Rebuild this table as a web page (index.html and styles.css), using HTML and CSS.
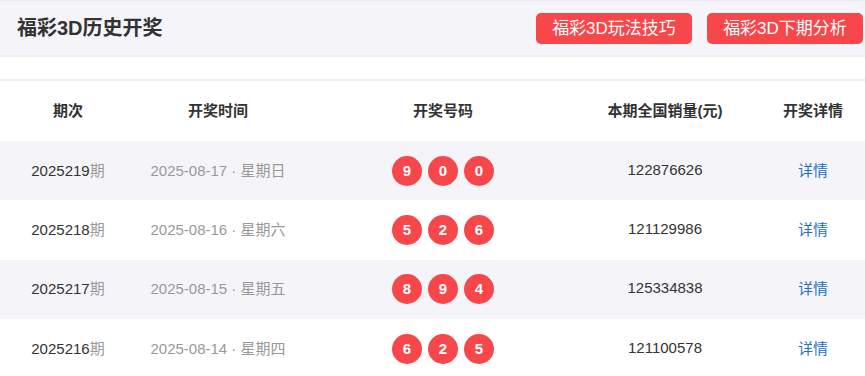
FILE: index.html
```html
<!DOCTYPE html>
<html lang="zh-CN">
<head>
<meta charset="utf-8">
<title>福彩3D历史开奖</title>
<link rel="stylesheet" href="styles.css">
</head>
<body>
<div class="page">
  <header class="top">
    <h1 class="title">福彩3D历史开奖</h1>
    <nav class="actions">
      <a class="btn" href="#">福彩3D玩法技巧</a>
      <a class="btn" href="#">福彩3D下期分析</a>
    </nav>
  </header>
  <div class="spacer"></div>
  <div class="table">
    <div class="row head">
      <div class="cell">期次</div>
      <div class="cell">开奖时间</div>
      <div class="cell">开奖号码</div>
      <div class="cell">本期全国销量(元)</div>
      <div class="cell">开奖详情</div>
    </div>
    <div class="row odd">
      <div class="cell issue">2025219<span class="unit">期</span></div>
      <div class="cell date">2025-08-17 · 星期日</div>
      <div class="cell balls"><span class="ball">9</span><span class="ball">0</span><span class="ball">0</span></div>
      <div class="cell sales">122876626</div>
      <div class="cell"><a class="link" href="#">详情</a></div>
    </div>
    <div class="row">
      <div class="cell issue">2025218<span class="unit">期</span></div>
      <div class="cell date">2025-08-16 · 星期六</div>
      <div class="cell balls"><span class="ball">5</span><span class="ball">2</span><span class="ball">6</span></div>
      <div class="cell sales">121129986</div>
      <div class="cell"><a class="link" href="#">详情</a></div>
    </div>
    <div class="row odd">
      <div class="cell issue">2025217<span class="unit">期</span></div>
      <div class="cell date">2025-08-15 · 星期五</div>
      <div class="cell balls"><span class="ball">8</span><span class="ball">9</span><span class="ball">4</span></div>
      <div class="cell sales">125334838</div>
      <div class="cell"><a class="link" href="#">详情</a></div>
    </div>
    <div class="row">
      <div class="cell issue">2025216<span class="unit">期</span></div>
      <div class="cell date">2025-08-14 · 星期四</div>
      <div class="cell balls"><span class="ball">6</span><span class="ball">2</span><span class="ball">5</span></div>
      <div class="cell sales">121100578</div>
      <div class="cell"><a class="link" href="#">详情</a></div>
    </div>
  </div>
</div>
</body>
</html>
```

FILE: styles.css
```css
html, body {
  margin: 0;
  padding: 0;
  background: #fff;
  overflow: hidden;
}
body {
  font-family: "Liberation Sans", Arial, "Noto Sans CJK SC", sans-serif;
  color: #333;
}
.page {
  width: 865px;
  overflow: hidden;
}
.top {
  display: flex;
  align-items: center;
  justify-content: space-between;
  height: 54px;
  padding: 0 2px 0 17px;
  background: #f5f5f9;
  border-top: 1px solid #ebebef;
  border-bottom: 2px solid #eeeeee;
}
.title {
  margin: 0;
  font-size: 20px;
  font-weight: bold;
  color: #333;
  line-height: 1;
}
.actions {
  display: flex;
  gap: 15px;
  padding-top: 1px;
}
.btn {
  display: block;
  width: 156px;
  height: 31px;
  line-height: 31px;
  text-align: center;
  background: #f7474a;
  color: #fff;
  font-size: 17px;
  border-radius: 5px;
  text-decoration: none;
}
.spacer {
  height: 22px;
}
.table {
  width: 882px;
  border-top: 2px solid #eeeeee;
}
.row {
  display: grid;
  grid-template-columns: 136px 164px 286px 158px 138px;
  height: 59.4px;
  align-items: center;
}
.row.head {
  height: 60px;
  font-weight: bold;
  font-size: 15px;
  color: #333;
}
.row.odd {
  background: #f5f5f9;
}
.cell {
  text-align: center;
  font-size: 15px;
  padding-bottom: 3px;
}
.issue {
  color: #333;
}
.unit {
  color: #999;
}
.date {
  color: #999;
}
.cell.balls {
  display: flex;
  justify-content: center;
  gap: 6px;
  padding-bottom: 0;
}
.ball {
  width: 30px;
  height: 30px;
  border-radius: 50%;
  background: #f7474a;
  color: #fff;
  font-weight: bold;
  font-size: 15px;
  line-height: 30px;
  text-align: center;
}
.sales {
  color: #333;
}
.link {
  color: #2471c6;
  text-decoration: none;
}
```
